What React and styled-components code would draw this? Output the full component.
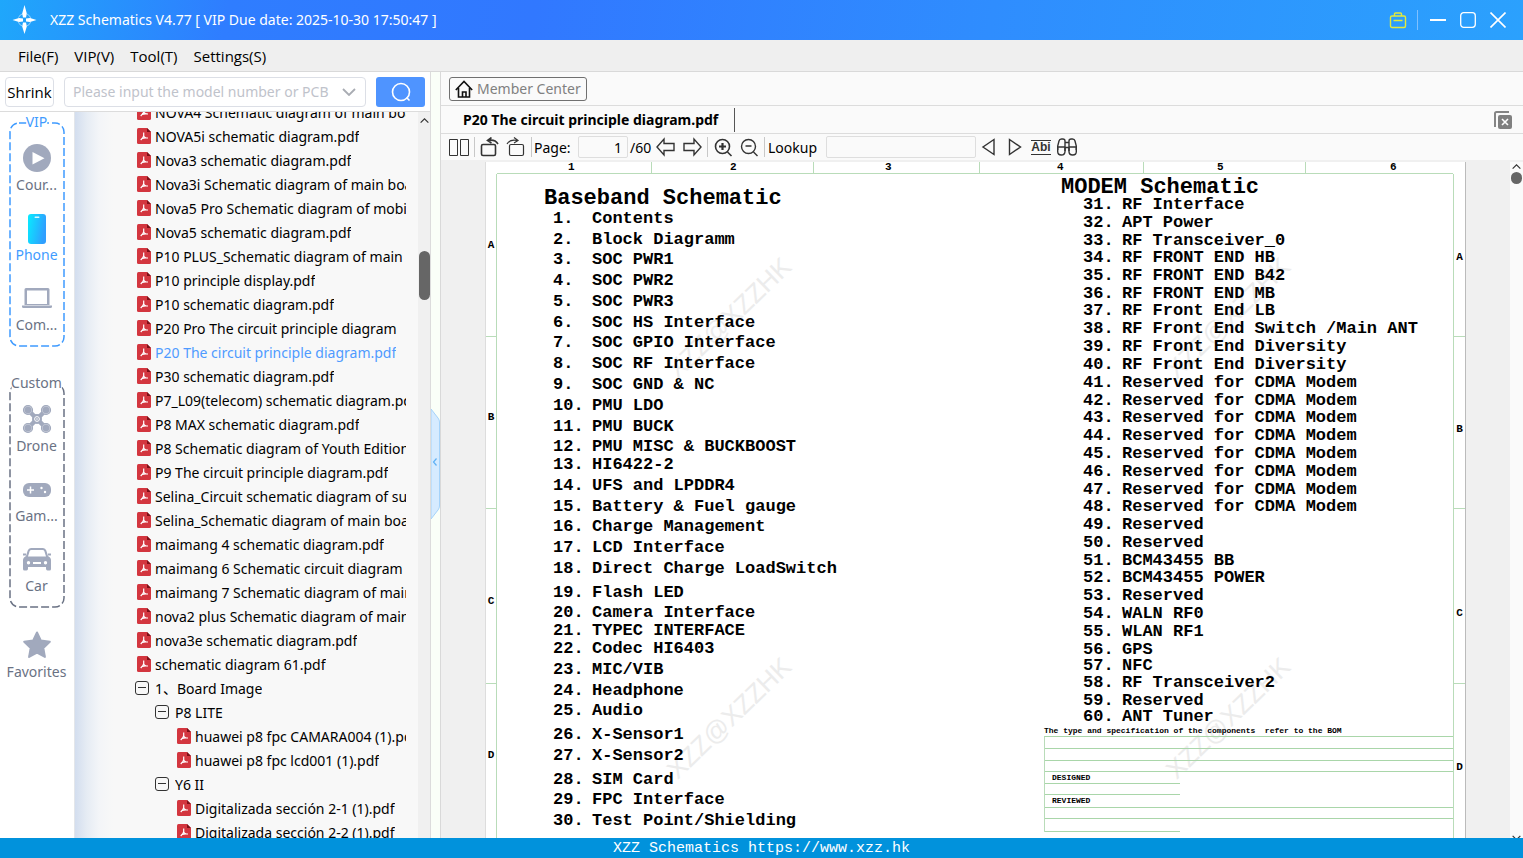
import React, { useState } from 'react';
import styled, { createGlobalStyle, css } from 'styled-components';

const UI_FONT = "'Noto Sans', 'Noto Sans CJK SC', sans-serif";
const MENU_FONT = "'Open Sans', 'Noto Sans CJK SC', sans-serif";
const MONO_FONT = "'Liberation Mono', monospace";

const GlobalStyle = createGlobalStyle`
  * {
    box-sizing: border-box;
  }

  body {
    margin: 0;
    overflow: hidden;
    font-family: ${UI_FONT};
    font-size: 14px;
    color: #000;
  }

  button,
  input {
    font: inherit;
    color: inherit;
    padding: 0;
    margin: 0;
    border: 0;
    background: none;
  }

  ul,
  ol {
    list-style: none;
    margin: 0;
    padding: 0;
  }

  svg {
    display: block;
    flex: none;
  }
`;

const Window = styled.div`
  display: flex;
  flex-direction: column;
  height: 100vh;
  overflow: hidden;
`;

/* title bar and menu */

const TitleBar = styled.header`
  flex: none;
  display: flex;
  align-items: center;
  height: 40px;
  padding: 0 10px 0 12px;
  color: #fff;
  background: linear-gradient(100deg, #1fa7fb 0%, #2f7dff 15%, #3178ff 35%, #2f8dfe 65%, #2ba1fd 100%);
`;

const Title = styled.h1`
  flex: 1;
  margin: 0 0 0 12px;
  font-size: 14px;
  font-weight: 400;
  line-height: 20px;
`;

const WindowButton = styled.button`
  display: grid;
  place-items: center;
  width: 30px;
  height: 30px;
`;

const TitleDivider = styled.span`
  width: 1px;
  height: 20px;
  margin: 0 5px 0 4px;
  background: #7fc0ff;
`;

const MenuBar = styled.nav`
  flex: none;
  display: flex;
  gap: 16px;
  height: 32px;
  padding: 0 18px;
  background: #efefef;
  border-bottom: 1px solid #d9d9d9;
`;

const MenuButton = styled.button`
  font-family: ${MENU_FONT};
  font-size: 15px;
  line-height: 32px;
`;

const Workspace = styled.div`
  flex: 1;
  min-height: 0;
  display: flex;
`;

/* left side */

const Sidebar = styled.aside`
  flex: none;
  display: flex;
  flex-direction: column;
  width: 431px;
  background: #fff;
  border-right: 1px solid #dcdcdc;
`;

const SearchRow = styled.form`
  flex: none;
  display: flex;
  align-items: center;
  gap: 10px;
  height: 40px;
  padding: 0 5px;
  border-bottom: 1px solid #dcdcdc;
`;

const ShrinkButton = styled.button`
  width: 49px;
  height: 30px;
  font-family: ${MENU_FONT};
  font-size: 15px;
  border: 1px solid #dcdfe6;
  border-radius: 4px;
`;

const SearchBox = styled.div`
  flex: 1;
  display: flex;
  align-items: center;
  gap: 4px;
  height: 30px;
  padding: 0 9px 0 8px;
  border: 1px solid #dcdfe6;
  border-radius: 4px;
`;

const SearchInput = styled.input`
  flex: 1;
  min-width: 0;
  font-size: 14px;
  outline: none;

  &::placeholder {
    color: #bfc3cb;
    opacity: 1;
  }
`;

const SearchButton = styled.button`
  display: grid;
  place-items: center;
  width: 49px;
  height: 30px;
  background: #4f94ff;
  border-radius: 3px;
`;

const SidebarBody = styled.div`
  flex: 1;
  min-height: 0;
  display: flex;
`;

const Rail = styled.nav`
  flex: none;
  display: flex;
  flex-direction: column;
  align-items: center;
  width: 75px;
  padding: 10px 1px 0 0;
  border-right: 1px solid #e3e6ea;
`;

const RailGroup = styled.section`
  position: relative;
  width: 56px;
  height: 225px;
  padding-top: 8px;
  color: ${({ $color }) => $color};

  & + & {
    margin: 36px 0 9px;
  }
`;

const RailFrame = styled.svg`
  position: absolute;
  inset: 0;
  width: 100%;
  height: 100%;
`;

const RailLegend = styled.h2`
  position: absolute;
  top: -10px;
  left: 50%;
  transform: translateX(-50%);
  margin: 0;
  font-size: 14px;
  font-weight: 400;
  line-height: 20px;
  background: #fff;
`;

const RailButton = styled.button`
  position: relative;
  display: flex;
  flex-direction: column;
  align-items: center;
  width: 100%;
  height: 70px;
  padding-top: 14px;
  font-size: 14px;
  line-height: 20px;
  color: ${({ $active }) => ($active ? '#3f9bff' : '#6a7284')};

  svg {
    margin-bottom: 3px;
    overflow: visible;
  }
`;

const TreePane = styled.div`
  flex: 1;
  min-width: 0;
  overflow: hidden;
  padding-right: 12px;
  background: linear-gradient(90deg, #d3deef 0, #e6ecf4 12px, #f3f5f8 24px, #f8f8f8 38px);
`;

/* the list is scrolled so that its first row is cut by the search row */
const Tree = styled.ul`
  margin-top: -12px;
`;

const INDENTS = { root: 60, branch: 80, file: 62, leaf: 102 };

const TreeRow = styled.button`
  display: flex;
  align-items: center;
  gap: ${({ $kind }) => ($kind === 'file' || $kind === 'leaf' ? 4 : 6)}px;
  width: 100%;
  height: 24px;
  padding-left: ${({ $kind }) => INDENTS[$kind]}px;
  font-size: 14px;
  text-align: left;
  color: ${({ $active }) => ($active ? '#4f9bff' : '#000')};
`;

const TreeText = styled.span`
  overflow: hidden;
  white-space: nowrap;
`;

const ScrollTrack = styled.div`
  flex: none;
  display: flex;
  flex-direction: column;
  align-items: center;
  width: ${({ $width }) => $width}px;
  background: ${({ $color }) => $color};
`;

const ScrollThumb = styled.span`
  flex: none;
  width: 11px;
  height: ${({ $height }) => $height}px;
  margin-top: ${({ $top }) => $top}px;
  background: #666;
  border-radius: 6px;
`;

const ScrollArrow = styled.button`
  flex: none;
  display: grid;
  place-items: center;
  width: 12px;
  height: ${({ $height }) => $height}px;
`;

const ScrollGap = styled.span`
  flex: 1;
`;

const Splitter = styled.div`
  flex: none;
  display: flex;
  align-items: center;
  width: 10px;
  background: #fafff8;
  border-right: 1px solid #d9d9d9;
`;

const CollapseButton = styled.button`
  width: 9px;
  height: 110px;
  margin-top: 18px;
`;

/* right side */

const Main = styled.main`
  flex: 1;
  min-width: 0;
  display: flex;
  flex-direction: column;
  background: #fafafa;
`;

const bar = css`
  flex: none;
  display: flex;
  align-items: center;
  border-bottom: 1px solid #dcdcdc;
`;

const MemberBar = styled.div`
  ${bar}
  height: 34px;
  padding-left: 8px;
`;

const MemberButton = styled.button`
  display: flex;
  align-items: center;
  gap: 4px;
  height: 24px;
  padding: 0 5px;
  font-size: 14px;
  color: #808080;
  border: 1px solid #707070;
  border-radius: 3px;
`;

const TabBar = styled.div`
  ${bar}
  justify-content: space-between;
  height: 28px;
  padding-right: 11px;
`;

const Tab = styled.button`
  height: 24px;
  padding: 0 16px 0 22px;
  font-size: 14px;
  font-weight: 700;
  border-right: 1px solid #555;
`;

const Toolbar = styled.div`
  flex: none;
  display: flex;
  align-items: center;
  height: 26px;
  padding-left: 5px;
  font-size: 14px;
`;

const ToolButton = styled.button`
  display: grid;
  place-items: center;
  width: 26px;
  height: 24px;
`;

const ToolDivider = styled.span`
  width: 1px;
  height: 20px;
  margin: 0 2px;
  background: #c8c8c8;
`;

const ToolLabel = styled.label`
  width: ${({ $width }) => $width}px;
  padding-left: ${({ $lead = 0 }) => $lead}px;
`;

const ToolInput = styled.input`
  width: ${({ $width }) => $width}px;
  height: 22px;
  padding: 0 5px;
  text-align: ${({ $align }) => $align || 'left'};
  border: 1px solid #dedede;
  border-radius: 2px;
  outline: none;
`;

const AbiText = styled.span`
  font-family: 'Liberation Sans', sans-serif;
  font-size: 12px;
  font-weight: 700;
  line-height: 13px;
  color: #333;
  border-top: 1px solid #333;
  border-bottom: 1px solid #333;
`;

const Viewer = styled.div`
  flex: 1;
  min-height: 0;
  display: flex;
  padding-top: 2px;
  background: #f0f0f0;
`;

const Sheet = styled.article`
  flex: 1;
  min-width: 0;
  display: grid;
  grid-template-columns: 11px 1fr 12px;
  grid-template-rows: 12px 1fr;
  margin: 0 44px;
  overflow: hidden;
  font-family: ${MONO_FONT};
  font-weight: 700;
  background: #fff;
  border-left: 1px solid #ddd;
  border-right: 1px solid #bbb;
`;

const TopRuler = styled.div`
  grid-column: 2;
  display: grid;
  grid-template-columns: 154fr 162fr 166fr 164fr 162fr 148fr;
  border-bottom: 1px solid #b9dcb9;
`;

const TopMark = styled.span`
  padding-left: ${({ $lead }) => $lead}px;
  font-size: 11px;
  line-height: 11px;

  & + & {
    border-left: 1px solid #b9dcb9;
  }
`;

const SideRuler = styled.div`
  grid-row: 2;
  grid-column: ${({ $column }) => $column};
  display: flex;
  flex-direction: column;
  ${({ $column }) => ($column === 1 ? 'border-right' : 'border-left')}: 1px solid #b9dcb9;
`;

const SideMark = styled.span`
  flex: none;
  height: ${({ $height }) => $height}px;
  padding-top: ${({ $lead }) => $lead}px;
  font-size: 11px;
  line-height: 12px;
  text-align: center;
  border-bottom: 1px solid #b9dcb9;
`;

const SheetBody = styled.div`
  position: relative;
  grid-column: 2;
  grid-row: 2;
  min-height: 0;
  display: grid;
  grid-template-columns: 547fr 409fr;
`;

const Column = styled.section`
  position: relative;
  padding-top: ${({ $top }) => $top}px;
`;

const ColumnTitle = styled.h2`
  margin: 0 0 0 ${({ $indent }) => $indent}px;
  font-size: 22px;
  line-height: 20px;
`;

const Contents = styled.ol`
  padding-left: ${({ $indent }) => $indent}px;
`;

const ContentsRow = styled.li`
  display: flex;
  align-items: flex-end;
  height: ${({ $height }) => $height}px;
  font-size: 17px;
  line-height: 16px;
  white-space: nowrap;
`;

const ContentsNumber = styled.span`
  flex: none;
  width: 39px;
`;

const BomNote = styled.p`
  margin: 0;
  font-size: 8px;
  line-height: 11px;
  white-space: pre;
`;

const TitleBlock = styled.div`
  border-top: 1px solid #a9d6a9;
  border-left: 1px solid #b9dcb9;
`;

const TitleBlockRow = styled.div`
  width: ${({ $half }) => ($half ? '33%' : '100%')};
  height: ${({ $height }) => $height || 12}px;
  padding-left: 7px;
  font-size: 8px;
  line-height: 12px;
  border-bottom: 1px solid #a9d6a9;
`;

const Watermark = styled.span`
  position: absolute;
  left: ${({ $x }) => $x}%;
  top: ${({ $y }) => $y}px;
  font-family: 'Liberation Sans', sans-serif;
  font-size: 26px;
  font-weight: 400;
  line-height: 28px;
  color: #ececec;
  transform: translate(-50%, -50%) rotate(-44deg);
`;

const StatusBar = styled.footer`
  flex: none;
  height: 20px;
  overflow: hidden;
  font-family: ${MONO_FONT};
  font-size: 15px;
  line-height: 22px;
  text-align: center;
  color: #fff;
  background: #0192dc;
`;

/* icons */

const LogoIcon = () => (
  <svg width="26" height="30" viewBox="0 0 26 30" fill="#fff">
    <path d="M12.500 0l2.300 8.500-.8 4h-3l-.8-4zM12.500 29l2.300-7.500-.8-4h-3l-.8 4zM.500 15l6.500-2 4 .5v3l-4 .5zM24.500 15L18 13l-4 .5v3l4 .5z" />
    <circle
      cx="12.500"
      cy="15"
      r="6.500"
      fill="none"
      stroke="#fff"
      strokeOpacity=".5"
      strokeWidth="1"
      strokeDasharray="6 4.200"
      strokeDashoffset="-2"
    />
  </svg>
);

const BagIcon = () => (
  <svg width="18" height="18" viewBox="0 0 18 18" fill="none" stroke="#e3ea3c" strokeWidth="1.4">
    <rect x="1.500" y="5" width="15" height="11.500" rx="1.500" />
    <path d="M5.500 5V3q0-1 1-1h5q1 0 1 1v2M4.500 9.500h9" />
  </svg>
);

const MinimizeIcon = () => (
  <svg width="16" height="16" viewBox="0 0 16 16" stroke="#fff" strokeWidth="2">
    <path d="M0 8h16" />
  </svg>
);

const MaximizeIcon = () => (
  <svg width="16" height="16" viewBox="0 0 16 16" fill="none" stroke="#fff" strokeWidth="1.3">
    <rect x=".7" y=".7" width="14.600" height="14.600" rx="3" />
  </svg>
);

const CloseIcon = () => (
  <svg width="16" height="16" viewBox="0 0 16 16" stroke="#fff" strokeWidth="1.6">
    <path d="M.5.5l15 15M15.500.5l-15 15" />
  </svg>
);

const ChevronIcon = ({ up, width = 14, color = '#a9acb3' }) => (
  <svg width={width} height={width / 2 + 1} viewBox="0 0 14 8" fill="none" stroke={color} strokeWidth="1.8">
    <path d={up ? 'M1 7l6-6 6 6' : 'M1 1l6 6 6-6'} />
  </svg>
);

const SearchIcon = () => (
  <svg width="22" height="20" viewBox="0 0 22 20" fill="none" stroke="#fff" strokeWidth="1.6">
    <circle cx="11" cy="10" r="8.500" />
    <path d="M16.500 15.500l3 3" />
  </svg>
);

const CourseIcon = () => (
  <svg width="28" height="28" viewBox="0 0 28 28">
    <circle cx="14" cy="14" r="14" fill="#a1a9bd" />
    <path d="M9.500 8v12.500l12-6.200z" fill="#fff" />
  </svg>
);

const PhoneIcon = () => (
  <svg width="28" height="28" viewBox="0 2 28 28">
    <defs>
      <linearGradient id="phone" x1="0" x2="1" y1="0" y2="0.300">
        <stop offset="0" stopColor="#08ecff" />
        <stop offset="1" stopColor="#2f9fff" />
      </linearGradient>
    </defs>
    <rect x="5" y="2" width="18" height="30" rx="3" fill="url(#phone)" />
    <rect x="11.500" y="4.500" width="5" height="1.500" rx=".7" fill="#d8faff" />
  </svg>
);

const LaptopIcon = () => (
  <svg width="30" height="28" viewBox="0 0 30 28" fill="#a1a9bd">
    <path d="M4 4h22q1.500 0 1.500 1.500V21H2.500V5.500Q2.500 4 4 4zM5 6.500V20h20V6.500z" fillRule="evenodd" />
    <path d="M0 21.500h30v1q0 1.500-1.500 1.500h-27Q0 24 0 22.500z" />
  </svg>
);

const ROTORS = [[5, 5], [23, 5], [5, 23], [23, 23]];

const DroneIcon = () => (
  <svg width="28" height="28" viewBox="0 0 28 28" fill="none" stroke="#a1a9bd">
    <path d="M5 5l9 9M23 5l-9 9M5 23l9-9M23 23l-9-9" strokeWidth="4.500" />
    <circle cx="14" cy="14" r="5" fill="#a1a9bd" stroke="none" />
    {ROTORS.map(([x, y]) => (
      <g key={`${x}-${y}`}>
        <circle cx={x} cy={y} r="4.500" fill="#c5cad7" strokeWidth="1.200" />
        <circle cx={x} cy={y} r="3.200" fill="#a1a9bd" stroke="none" />
      </g>
    ))}
    <circle cx="14" cy="14" r="2.400" stroke="#fff" strokeWidth="1" />
    <circle cx="14" cy="14" r=".8" fill="#fff" stroke="none" />
  </svg>
);

const GamepadIcon = () => (
  <svg width="28" height="28" viewBox="0 0 28 28">
    <rect y="8" width="28" height="14" rx="6" fill="#a1a9bd" />
    <path d="M7.500 11.500v7M4 15h7" stroke="#fff" strokeWidth="1.500" />
    <circle cx="18.500" cy="13" r="1.200" fill="#fff" />
    <circle cx="22" cy="17" r="1.200" fill="#fff" />
  </svg>
);

const CarIcon = () => (
  <svg width="28" height="28" viewBox="0 0 28 28" fill="#a1a9bd">
    <path
      d="M8 3h12q2.500 0 3.300 2.500L25 11l2 1.500q1 1 1 2.500v9q0 1.500-1.500 1.500h-2q-1.500 0-1.500-2V22H5v1.500q0 2-1.500 2h-2Q0 25.500 0 24V15q0-1.500 1-2.500L3 11l1.700-5.500Q5.500 3 8 3zM8.500 5Q7 5 6.600 6.300L5 11.500h18l-1.600-5.200Q21 5 19.500 5zM5.500 16a1.700 1.700 0 100 3.400 1.700 1.700 0 000-3.400zM22.500 16a1.700 1.700 0 100 3.400 1.700 1.700 0 000-3.400zM10 17v2h8v-2z"
      fillRule="evenodd"
    />
    <path d="M0 8.500h3v2H0zM25 8.500h3v2h-3z" />
  </svg>
);

const StarIcon = () => (
  <svg width="28" height="28" viewBox="0 0 28 28" fill="#a1a9bd" stroke="#a1a9bd" strokeWidth="2" strokeLinejoin="round">
    <path d="M14 1.500l3.900 8.100 8.900 1.200-6.500 6.200 1.600 8.900-7.900-4.300-7.900 4.300 1.600-8.900-6.500-6.200 8.900-1.200z" />
  </svg>
);

const PdfIcon = () => (
  <svg width="14" height="16" viewBox="0 0 14 16">
    <path d="M1.500 0H10l4 4v10.500q0 1.500-1.500 1.500h-11Q0 16 0 14.500v-13Q0 0 1.500 0z" fill="#d3363f" />
    <path d="M10 0l4 4h-4z" fill="#7d1018" />
    <path d="M6.700 4.500v3q0 1.500-3 4.500M6.700 7.500q.5 2.500 4.300 2.500M4.500 10.800q3-1.300 6-.8" fill="none" stroke="#fff" strokeWidth="1.200" />
  </svg>
);

const CollapseIcon = () => (
  <svg width="14" height="14" viewBox="0 0 14 14" fill="none" stroke="#333">
    <rect x=".5" y=".5" width="13" height="13" rx="2.500" />
    <path d="M3 6.500h8" />
  </svg>
);

const HandleIcon = () => (
  <svg width="9" height="110" viewBox="0 0 9 110">
    <path d="M0 0l7 9q1.500 2 1.500 4v84q0 2-1.500 4l-7 9z" fill="#d6ebff" stroke="#a5d3fa" />
    <path d="M5.500 49.500l-3 3.500 3 3.500" fill="none" stroke="#5fb1f5" strokeWidth="1.200" />
  </svg>
);

const HomeIcon = () => (
  <svg width="18" height="18" viewBox="0 0 18 18" fill="none" stroke="#111" strokeWidth="1.600">
    <path d="M.8 10L9 1.500l8.200 8.500M3.500 8v9h11V8M7.500 17v-5h3.500v5" />
  </svg>
);

const CloseTabsIcon = () => (
  <svg width="18" height="18" viewBox="0 0 18 18">
    <path d="M1 16V2.500Q1 1 2.500 1H15" fill="none" stroke="#858585" strokeWidth="2" />
    <rect x="4" y="4" width="14" height="14" rx="2" fill="#808080" />
    <path d="M8 8l6 6M14 8l-6 6" stroke="#fff" strokeWidth="1.600" />
  </svg>
);

const ToolIcon = ({ d, width = 1.4, children }) => (
  <svg width="20" height="20" viewBox="0 0 20 20" fill="none" stroke="#333" strokeWidth={width}>
    <path d={d} />
    {children}
  </svg>
);

const PagesIcon = () => <ToolIcon width={1} d="M.5 2.500h8v16h-8zM11.500 2.500h8v16h-8z" />;

const RotateLeftIcon = () => (
  <ToolIcon
    width={1.6}
    d="M3 7.500h11q1.500 0 1.500 1.500v8q0 1.500-1.500 1.500H3Q1.500 18.500 1.500 17V9Q1.500 7.500 3 7.500zM8 3.500q7-1.500 10 3.500M11.500.5l-4 3 4 2.500"
  />
);

const RotateRightIcon = () => (
  <ToolIcon
    width={1.2}
    d="M5 7.500h11q1.500 0 1.500 1.500v8q0 1.500-1.500 1.500H5Q3.500 18.500 3.500 17V9Q3.500 7.500 5 7.500zM11 3.500Q4 2 1 7M8 .5l4 3-4 2.500"
  />
);

const ArrowLeftIcon = () => <ToolIcon d="M1 10l7-8v4.500h10v7H8V18z" />;
const ArrowRightIcon = () => <ToolIcon d="M19 10l-7-8v4.500H2v7h10V18z" />;

const ZoomInIcon = () => (
  <ToolIcon width={1.6} d="M14.500 15l4 4">
    <circle cx="9.500" cy="9.500" r="7" />
    <path d="M9.500 6v7M6 9.500h7" strokeWidth="2.200" />
  </ToolIcon>
);

const ZoomOutIcon = () => (
  <ToolIcon d="M14.500 15l4 4M6.500 9h6">
    <circle cx="9.500" cy="9.500" r="7" />
  </ToolIcon>
);

const PreviousIcon = () => <ToolIcon d="M15 2.500v15L4 10z" />;
const NextIcon = () => <ToolIcon d="M4.500 2.500v15l11-7.500z" />;

const BinocularsIcon = () => (
  <ToolIcon d="M.7 13V9l1.300-5Q2.500 2 4.500 2h1.300Q8 2 8 4v10M19.300 13V9L18 4q-.5-2-2.500-2h-1.300Q12 2 12 4v10M8 5.500h4M8 10.500h4M1 10h6.500M12.500 10H19">
    <path d="M.7 10.500v4Q.7 18 4.300 18T8 14.500v-4M12 10.500v4q0 3.500 3.700 3.500t3.600-3.500v-4" />
  </ToolIcon>
);

/* data */

const MENUS = ['File(F)', 'VIP(V)', 'Tool(T)', 'Settings(S)'];

const VIP_ITEMS = [
  { label: 'Cour...', Icon: CourseIcon },
  { label: 'Phone', Icon: PhoneIcon },
  { label: 'Com...', Icon: LaptopIcon },
];

const CUSTOM_ITEMS = [
  { label: 'Drone', Icon: DroneIcon },
  { label: 'Gam...', Icon: GamepadIcon },
  { label: 'Car', Icon: CarIcon },
];

const TREE = [
  ['file', 'NOVA4 Schematic diagram of main board.pdf'],
  ['file', 'NOVA5i schematic diagram.pdf'],
  ['file', 'Nova3 schematic diagram.pdf'],
  ['file', 'Nova3i Schematic diagram of main board.pdf'],
  ['file', 'Nova5 Pro Schematic diagram of mobile.pdf'],
  ['file', 'Nova5 schematic diagram.pdf'],
  ['file', 'P10 PLUS_Schematic diagram of main board.pdf'],
  ['file', 'P10 principle display.pdf'],
  ['file', 'P10 schematic diagram.pdf'],
  ['file', 'P20 Pro The circuit principle diagram'],
  ['file', 'P20 The circuit principle diagram.pdf'],
  ['file', 'P30 schematic diagram.pdf'],
  ['file', 'P7_L09(telecom) schematic diagram.pdf'],
  ['file', 'P8 MAX schematic diagram.pdf'],
  ['file', 'P8 Schematic diagram of Youth Edition.pdf'],
  ['file', 'P9 The circuit principle diagram.pdf'],
  ['file', 'Selina_Circuit schematic diagram of sub.pdf'],
  ['file', 'Selina_Schematic diagram of main board.pdf'],
  ['file', 'maimang 4 schematic diagram.pdf'],
  ['file', 'maimang 6 Schematic circuit diagram'],
  ['file', 'maimang 7 Schematic diagram of main.pdf'],
  ['file', 'nova2 plus Schematic diagram of main.pdf'],
  ['file', 'nova3e schematic diagram.pdf'],
  ['file', 'schematic diagram 61.pdf'],
  ['root', '1、Board Image'],
  ['branch', 'P8 LITE'],
  ['leaf', 'huawei p8 fpc CAMARA004 (1).pdf'],
  ['leaf', 'huawei p8 fpc lcd001 (1).pdf'],
  ['branch', 'Y6 II'],
  ['leaf', 'Digitalizada sección 2-1 (1).pdf'],
  ['leaf', 'Digitalizada sección 2-2 (1).pdf'],
];

// [text, row height]
const BASEBAND = [
  ['Contents', 18],
  ['Block Diagramm', 21],
  ['SOC PWR1', 20],
  ['SOC PWR2', 21],
  ['SOC PWR3', 21],
  ['SOC HS Interface', 21],
  ['SOC GPIO Interface', 20],
  ['SOC RF Interface', 21],
  ['SOC GND & NC', 21],
  ['PMU LDO', 21],
  ['PMU BUCK', 21],
  ['PMU MISC & BUCKBOOST', 20],
  ['HI6422-2', 18],
  ['UFS and LPDDR4', 21],
  ['Battery & Fuel gauge', 21],
  ['Charge Management', 20],
  ['LCD Interface', 21],
  ['Direct Charge LoadSwitch', 21],
  ['Flash LED', 24],
  ['Camera Interface', 20],
  ['TYPEC INTERFACE', 18],
  ['Codec HI6403', 18],
  ['MIC/VIB', 21],
  ['Headphone', 21],
  ['Audio', 20],
  ['X-Sensor1', 24],
  ['X-Sensor2', 21],
  ['SIM Card', 24],
  ['FPC Interface', 20],
  ['Test Point/Shielding', 21],
];

const MODEM = [
  ['RF Interface', 15],
  ['APT Power', 18],
  ['RF Transceiver_0', 18],
  ['RF FRONT END HB', 17],
  ['RF FRONT END B42', 18],
  ['RF FRONT END MB', 18],
  ['RF Front End LB', 17],
  ['RF Front End Switch /Main ANT', 18],
  ['RF Front End Diversity', 18],
  ['RF Front End Diversity', 18],
  ['Reserved for CDMA Modem', 18],
  ['Reserved for CDMA Modem', 18],
  ['Reserved for CDMA Modem', 17],
  ['Reserved for CDMA Modem', 18],
  ['Reserved for CDMA Modem', 18],
  ['Reserved for CDMA Modem', 18],
  ['Reserved for CDMA Modem', 18],
  ['Reserved for CDMA Modem', 17],
  ['Reserved', 18],
  ['Reserved', 18],
  ['BCM43455 BB', 18],
  ['BCM43455 POWER', 17],
  ['Reserved', 18],
  ['WALN RF0', 18],
  ['WLAN RF1', 18],
  ['GPS', 18],
  ['NFC', 16],
  ['RF Transceiver2', 17],
  ['Reserved', 18],
  ['ANT Tuner', 16],
];

const TOP_MARKS = [71, 78, 71, 77, 73, 84];

const SIDE_MARKS = [
  ['A', 163],
  ['B', 172],
  ['C', 175],
  ['D', 172],
];

const LEFT_LEADS = [65, 74, 86, 65];
const RIGHT_LEADS = [77, 86, 98, 77];

/* parts */

const Group = ({ title, color, items, active, onSelect }) => (
  <RailGroup $color={color}>
    <RailFrame fill="none" stroke="currentColor" strokeWidth="1.500" strokeDasharray="8 3">
      <rect x="1" y="1" width="54" height="223" rx="9" />
    </RailFrame>
    <RailLegend>{title}</RailLegend>
    {items.map(({ label, Icon }) => (
      <RailButton key={label} type="button" $active={label === active} onClick={() => onSelect(label)}>
        <Icon />
        {label}
      </RailButton>
    ))}
  </RailGroup>
);

const ContentsList = ({ indent, start, rows }) => (
  <Contents $indent={indent} start={start}>
    {rows.map(([text, height], index) => (
      <ContentsRow key={start + index} $height={height}>
        <ContentsNumber>{start + index}.</ContentsNumber>
        {text}
      </ContentsRow>
    ))}
  </Contents>
);

const Ruler = ({ column, leads }) => (
  <SideRuler $column={column}>
    {SIDE_MARKS.map(([letter, height], index) => (
      <SideMark key={letter} $height={height} $lead={leads[index]}>
        {letter}
      </SideMark>
    ))}
  </SideRuler>
);

const Schematic = () => (
  <Sheet>
    <TopRuler>
      {TOP_MARKS.map((lead, index) => (
        <TopMark key={lead + index} $lead={lead}>
          {index + 1}
        </TopMark>
      ))}
    </TopRuler>
    <Ruler column={1} leads={LEFT_LEADS} />
    <SheetBody>
      <Watermark $x={24.3} $y={144}>XZZ@XZZHK</Watermark>
      <Watermark $x={76.5} $y={144}>XZZ@XZZHK</Watermark>
      <Watermark $x={24.3} $y={544}>XZZ@XZZHK</Watermark>
      <Watermark $x={76.5} $y={544}>XZZ@XZZHK</Watermark>
      <Column $top={15}>
        <ColumnTitle $indent={47}>Baseband Schematic</ColumnTitle>
        <ContentsList indent={56} start={1} rows={BASEBAND} />
      </Column>
      <Column $top={4}>
        <ColumnTitle $indent={17}>MODEM Schematic</ColumnTitle>
        <ContentsList indent={39} start={31} rows={MODEM} />
        <BomNote>The type and specification of the components  refer to the BOM</BomNote>
        <TitleBlock>
          <TitleBlockRow />
          <TitleBlockRow />
          <TitleBlockRow $height={11} />
          <TitleBlockRow $half>DESIGNED</TitleBlockRow>
          <TitleBlockRow $half $height={11} />
          <TitleBlockRow $height={13}>REVIEWED</TitleBlockRow>
          <TitleBlockRow $height={11} />
          <TitleBlockRow $half $height={13} />
        </TitleBlock>
      </Column>
    </SheetBody>
    <Ruler column={3} leads={RIGHT_LEADS} />
  </Sheet>
);

const App = () => {
  const [category, setCategory] = useState('Phone');
  const [openFile, setOpenFile] = useState('P20 The circuit principle diagram.pdf');
  const [page, setPage] = useState('1');

  return (
    <Window>
      <GlobalStyle />
      <TitleBar>
        <LogoIcon />
        <Title>XZZ Schematics V4.77 [ VIP Due date: 2025-10-30 17:50:47 ]</Title>
        <WindowButton type="button" aria-label="Toolbox"><BagIcon /></WindowButton>
        <TitleDivider />
        <WindowButton type="button" aria-label="Minimize"><MinimizeIcon /></WindowButton>
        <WindowButton type="button" aria-label="Maximize"><MaximizeIcon /></WindowButton>
        <WindowButton type="button" aria-label="Close"><CloseIcon /></WindowButton>
      </TitleBar>
      <MenuBar>
        {MENUS.map((menu) => (
          <MenuButton key={menu} type="button">{menu}</MenuButton>
        ))}
      </MenuBar>
      <Workspace>
        <Sidebar>
          <SearchRow onSubmit={(e) => e.preventDefault()}>
            <ShrinkButton type="button">Shrink</ShrinkButton>
            <SearchBox>
              <SearchInput aria-label="Model number" placeholder="Please input the model number or PCB" />
              <ChevronIcon />
            </SearchBox>
            <SearchButton type="submit" aria-label="Search"><SearchIcon /></SearchButton>
          </SearchRow>
          <SidebarBody>
            <Rail>
              <Group title="VIP" color="#3f9bff" items={VIP_ITEMS} active={category} onSelect={setCategory} />
              <Group title="Custom" color="#6a7284" items={CUSTOM_ITEMS} active={category} onSelect={setCategory} />
              <RailButton type="button" onClick={() => setCategory('Favorites')}>
                <StarIcon />
                Favorites
              </RailButton>
            </Rail>
            <TreePane>
              <Tree>
                {TREE.map(([kind, name]) => (
                  <li key={name}>
                    <TreeRow type="button" $kind={kind} $active={name === openFile} onClick={() => setOpenFile(name)}>
                      {kind === 'root' || kind === 'branch' ? <CollapseIcon /> : <PdfIcon />}
                      <TreeText>{name}</TreeText>
                    </TreeRow>
                  </li>
                ))}
              </Tree>
            </TreePane>
            <ScrollTrack $width={12} $color="#f0f0f0">
              <ScrollArrow type="button" aria-label="Scroll up" $height={18}>
                <ChevronIcon up width={9} color="#333" />
              </ScrollArrow>
              <ScrollThumb $height={49} $top={121} />
            </ScrollTrack>
          </SidebarBody>
        </Sidebar>
        <Splitter>
          <CollapseButton type="button" aria-label="Collapse sidebar"><HandleIcon /></CollapseButton>
        </Splitter>
        <Main>
          <MemberBar>
            <MemberButton type="button">
              <HomeIcon />
              Member Center
            </MemberButton>
          </MemberBar>
          <TabBar>
            <Tab type="button">P20 The circuit principle diagram.pdf</Tab>
            <button type="button" aria-label="Close all tabs"><CloseTabsIcon /></button>
          </TabBar>
          <Toolbar>
            <ToolButton type="button" aria-label="Two pages"><PagesIcon /></ToolButton>
            <ToolDivider />
            <ToolButton type="button" aria-label="Rotate left"><RotateLeftIcon /></ToolButton>
            <ToolButton type="button" aria-label="Rotate right"><RotateRightIcon /></ToolButton>
            <ToolDivider />
            <ToolLabel htmlFor="page" $width={44}>Page:</ToolLabel>
            <ToolInput id="page" $width={50} $align="right" value={page} onChange={(e) => setPage(e.target.value)} />
            <ToolLabel as="span" $width={25} $lead={2}>/60</ToolLabel>
            <ToolButton type="button" aria-label="Previous page"><ArrowLeftIcon /></ToolButton>
            <ToolButton type="button" aria-label="Next page"><ArrowRightIcon /></ToolButton>
            <ToolDivider />
            <ToolButton type="button" aria-label="Zoom in"><ZoomInIcon /></ToolButton>
            <ToolButton type="button" aria-label="Zoom out"><ZoomOutIcon /></ToolButton>
            <ToolDivider />
            <ToolLabel htmlFor="lookup" $width={59} $lead={1}>Lookup</ToolLabel>
            <ToolInput id="lookup" $width={150} />
            <ToolButton type="button" aria-label="Find previous"><PreviousIcon /></ToolButton>
            <ToolButton type="button" aria-label="Find next"><NextIcon /></ToolButton>
            <ToolButton type="button"><AbiText>Abi</AbiText></ToolButton>
            <ToolButton type="button" aria-label="Find in all files"><BinocularsIcon /></ToolButton>
          </Toolbar>
          <Viewer>
            <Schematic />
            <ScrollTrack $width={13} $color="#fafafa">
              <ScrollArrow type="button" aria-label="Page up" $height={10}>
                <ChevronIcon up width={9} color="#333" />
              </ScrollArrow>
              <ScrollThumb $height={12} $top={0} />
              <ScrollGap />
              <ScrollArrow type="button" aria-label="Page down" $height={3}>
                <ChevronIcon width={9} color="#333" />
              </ScrollArrow>
            </ScrollTrack>
          </Viewer>
        </Main>
      </Workspace>
      <StatusBar>XZZ Schematics https://www.xzz.hk</StatusBar>
    </Window>
  );
};

export default App;
